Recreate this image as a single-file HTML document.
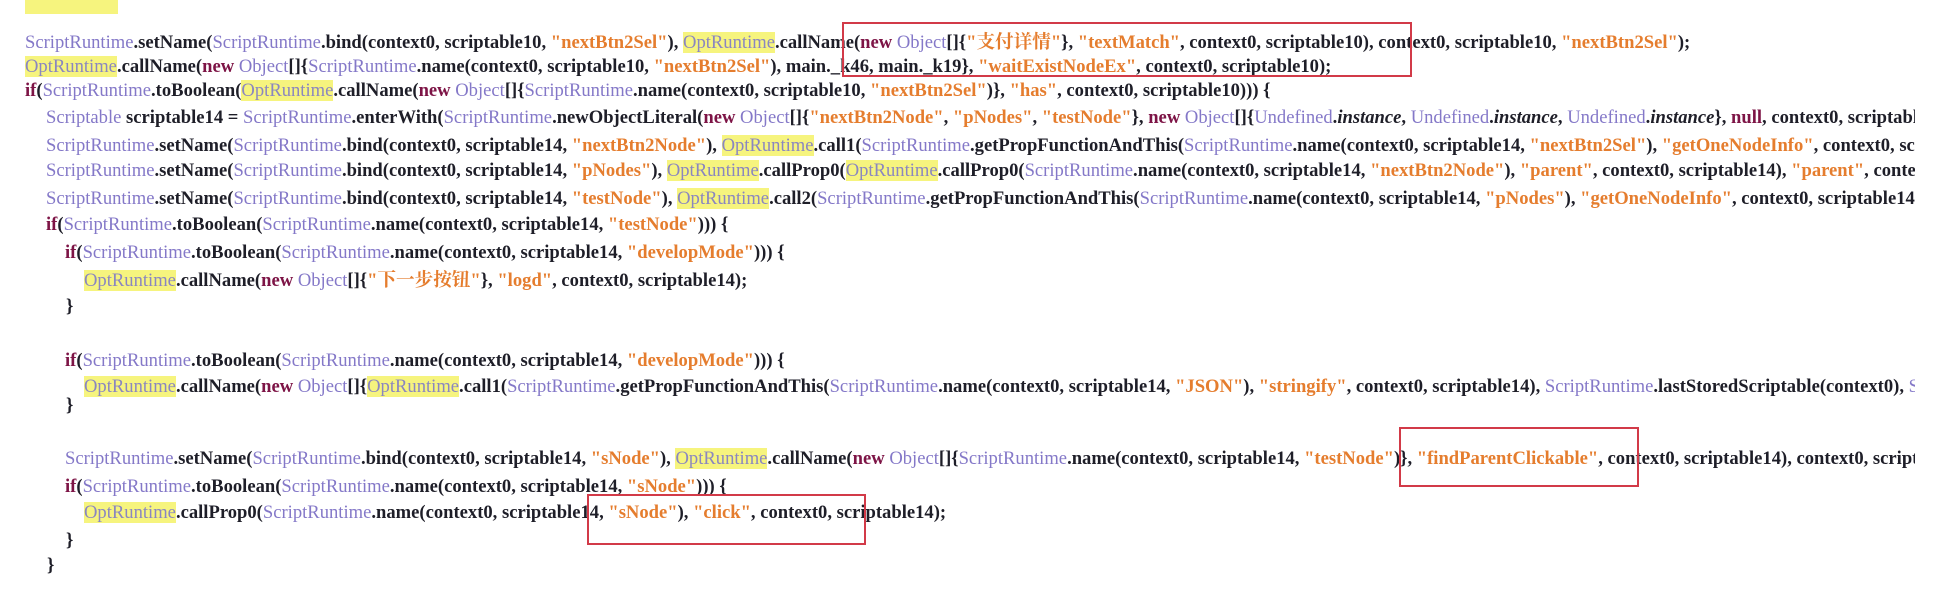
<!DOCTYPE html>
<html><head><meta charset="utf-8"><style>
html,body{margin:0;padding:0;background:#fff;}
body{width:1937px;height:603px;overflow:hidden;position:relative;font-family:"Liberation Serif","Noto Serif CJK SC",serif;font-size:18.6px;}
.wrap{position:absolute;left:0;top:0;width:1915px;height:603px;overflow:hidden;}
.l{position:absolute;white-space:nowrap;color:#1e1e28;font-weight:bold;line-height:22px;}
.p{color:#8478c8;font-weight:normal;}
.s{color:#e57d2e;font-weight:bold;}
.k{color:#7d1446;font-weight:bold;}
.y{background:#f6f47e;color:#8a86c0;font-weight:normal;}
i{font-weight:bold;}
.box{position:absolute;border:2px solid #d23a48;}
</style></head><body><div class="wrap">
<div class="l" style="left:25px;top:-7px;"><span class="y">&nbsp;&nbsp;&nbsp;&nbsp;&nbsp;&nbsp;&nbsp;&nbsp;&nbsp;&nbsp;&nbsp;&nbsp;&nbsp;&nbsp;&nbsp;&nbsp;&nbsp;&nbsp;&nbsp;&nbsp;</span></div>
<div class="l" style="left:25px;top:32px;"><span class="p">ScriptRuntime</span>.setName(<span class="p">ScriptRuntime</span>.bind(context0, scriptable10, <span class="s">"nextBtn2Sel"</span>), <span class="y">OptRuntime</span>.callName(<span class="k">new</span> <span class="p">Object</span>[]{<span class="s">"支付详情"</span>}, <span class="s">"textMatch"</span>, context0, scriptable10), context0, scriptable10, <span class="s">"nextBtn2Sel"</span>);</div>
<div class="l" style="left:25px;top:56px;"><span class="y">OptRuntime</span>.callName(<span class="k">new</span> <span class="p">Object</span>[]{<span class="p">ScriptRuntime</span>.name(context0, scriptable10, <span class="s">"nextBtn2Sel"</span>), main._k46, main._k19}, <span class="s">"waitExistNodeEx"</span>, context0, scriptable10);</div>
<div class="l" style="left:25px;top:80px;"><span class="k">if</span>(<span class="p">ScriptRuntime</span>.toBoolean(<span class="y">OptRuntime</span>.callName(<span class="k">new</span> <span class="p">Object</span>[]{<span class="p">ScriptRuntime</span>.name(context0, scriptable10, <span class="s">"nextBtn2Sel"</span>)}, <span class="s">"has"</span>, context0, scriptable10))) {</div>
<div class="l" style="left:46px;top:107px;"><span class="p">Scriptable</span> scriptable14 = <span class="p">ScriptRuntime</span>.enterWith(<span class="p">ScriptRuntime</span>.newObjectLiteral(<span class="k">new</span> <span class="p">Object</span>[]{<span class="s">"nextBtn2Node"</span>, <span class="s">"pNodes"</span>, <span class="s">"testNode"</span>}, <span class="k">new</span> <span class="p">Object</span>[]{<span class="p">Undefined</span>.<i>instance</i>, <span class="p">Undefined</span>.<i>instance</i>, <span class="p">Undefined</span>.<i>instance</i>}, <span class="k">null</span>, context0, scriptable10), context0);</div>
<div class="l" style="left:46px;top:135px;"><span class="p">ScriptRuntime</span>.setName(<span class="p">ScriptRuntime</span>.bind(context0, scriptable14, <span class="s">"nextBtn2Node"</span>), <span class="y">OptRuntime</span>.call1(<span class="p">ScriptRuntime</span>.getPropFunctionAndThis(<span class="p">ScriptRuntime</span>.name(context0, scriptable14, <span class="s">"nextBtn2Sel"</span>), <span class="s">"getOneNodeInfo"</span>, context0, scriptable14), context0);</div>
<div class="l" style="left:46px;top:160px;"><span class="p">ScriptRuntime</span>.setName(<span class="p">ScriptRuntime</span>.bind(context0, scriptable14, <span class="s">"pNodes"</span>), <span class="y">OptRuntime</span>.callProp0(<span class="y">OptRuntime</span>.callProp0(<span class="p">ScriptRuntime</span>.name(context0, scriptable14, <span class="s">"nextBtn2Node"</span>), <span class="s">"parent"</span>, context0, scriptable14), <span class="s">"parent"</span>, context0, scriptable14);</div>
<div class="l" style="left:46px;top:188px;"><span class="p">ScriptRuntime</span>.setName(<span class="p">ScriptRuntime</span>.bind(context0, scriptable14, <span class="s">"testNode"</span>), <span class="y">OptRuntime</span>.call2(<span class="p">ScriptRuntime</span>.getPropFunctionAndThis(<span class="p">ScriptRuntime</span>.name(context0, scriptable14, <span class="s">"pNodes"</span>), <span class="s">"getOneNodeInfo"</span>, context0, scriptable14), context0);</div>
<div class="l" style="left:46px;top:214px;"><span class="k">if</span>(<span class="p">ScriptRuntime</span>.toBoolean(<span class="p">ScriptRuntime</span>.name(context0, scriptable14, <span class="s">"testNode"</span>))) {</div>
<div class="l" style="left:65px;top:242px;"><span class="k">if</span>(<span class="p">ScriptRuntime</span>.toBoolean(<span class="p">ScriptRuntime</span>.name(context0, scriptable14, <span class="s">"developMode"</span>))) {</div>
<div class="l" style="left:84px;top:270px;"><span class="y">OptRuntime</span>.callName(<span class="k">new</span> <span class="p">Object</span>[]{<span class="s">"下一步按钮"</span>}, <span class="s">"logd"</span>, context0, scriptable14);</div>
<div class="l" style="left:66px;top:296px;">}</div>
<div class="l" style="left:65px;top:350px;"><span class="k">if</span>(<span class="p">ScriptRuntime</span>.toBoolean(<span class="p">ScriptRuntime</span>.name(context0, scriptable14, <span class="s">"developMode"</span>))) {</div>
<div class="l" style="left:84px;top:376px;"><span class="y">OptRuntime</span>.callName(<span class="k">new</span> <span class="p">Object</span>[]{<span class="y">OptRuntime</span>.call1(<span class="p">ScriptRuntime</span>.getPropFunctionAndThis(<span class="p">ScriptRuntime</span>.name(context0, scriptable14, <span class="s">"JSON"</span>), <span class="s">"stringify"</span>, context0, scriptable14), <span class="p">ScriptRuntime</span>.lastStoredScriptable(context0), <span class="p">ScriptRuntime</span></div>
<div class="l" style="left:66px;top:395px;">}</div>
<div class="l" style="left:65px;top:448px;"><span class="p">ScriptRuntime</span>.setName(<span class="p">ScriptRuntime</span>.bind(context0, scriptable14, <span class="s">"sNode"</span>), <span class="y">OptRuntime</span>.callName(<span class="k">new</span> <span class="p">Object</span>[]{<span class="p">ScriptRuntime</span>.name(context0, scriptable14, <span class="s">"testNode"</span>)}, <span class="s">"findParentClickable"</span>, context0, scriptable14), context0, scriptable14);</div>
<div class="l" style="left:65px;top:476px;"><span class="k">if</span>(<span class="p">ScriptRuntime</span>.toBoolean(<span class="p">ScriptRuntime</span>.name(context0, scriptable14, <span class="s">"sNode"</span>))) {</div>
<div class="l" style="left:84px;top:502px;"><span class="y">OptRuntime</span>.callProp0(<span class="p">ScriptRuntime</span>.name(context0, scriptable14, <span class="s">"sNode"</span>), <span class="s">"click"</span>, context0, scriptable14);</div>
<div class="l" style="left:66px;top:530px;">}</div>
<div class="l" style="left:47px;top:555px;">}</div>
<div class="box" style="left:842px;top:22px;width:566px;height:51px;"></div>
<div class="box" style="left:1399px;top:427px;width:236px;height:56px;"></div>
<div class="box" style="left:587px;top:494px;width:275px;height:47px;"></div>
</div></body></html>
